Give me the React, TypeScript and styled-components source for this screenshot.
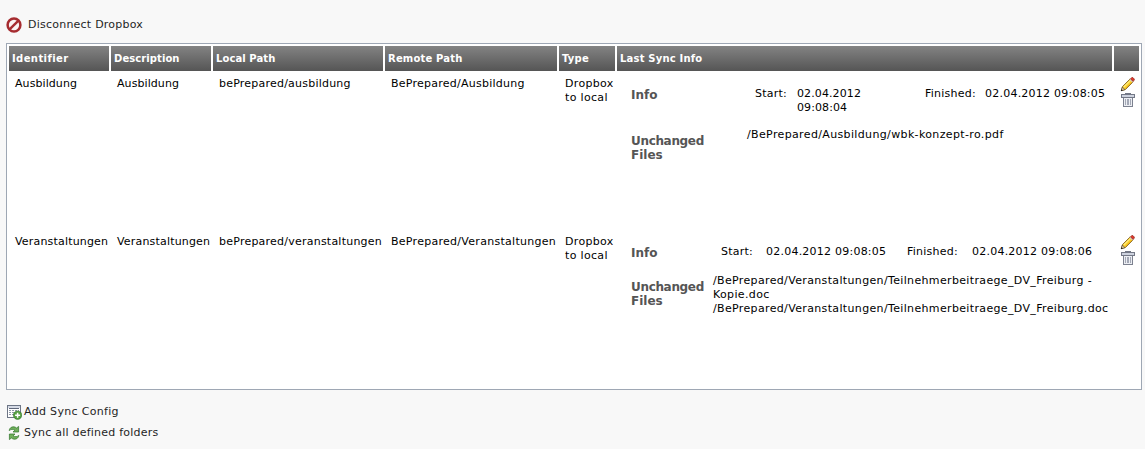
import React from 'react';
import styled, { createGlobalStyle } from 'styled-components';

const GlobalStyle = createGlobalStyle`
  body {
    margin: 0;
    background: #f8f8f8;
    color: #000;
    font: 11px/14px Verdana, "DejaVu Sans", sans-serif;
  }
`;

const Page = styled.main`
  box-sizing: border-box;
  width: 1145px;
  height: 449px;
  padding: 17px 3px 0 6px;
  overflow: hidden;
`;

const Text = styled.span<{ $track?: number }>`
  letter-spacing: ${(p) => p.$track ?? 0.23}px;
  white-space: nowrap;
`;

const Action = styled.a<{ $gap: number; $height: number }>`
  display: flex;
  align-items: center;
  gap: ${(p) => p.$gap}px;
  height: ${(p) => p.$height}px;
  color: #1f1f1f;
`;

const Panel = styled.section`
  box-sizing: border-box;
  width: 1136px;
  height: 347px;
  margin-top: 10px;
  padding: 2px;
  border: 1px solid #9ea7b4;
  background: #fff;
`;

const Row = styled.div`
  display: grid;
  grid-template-columns: 100px 100px 170px 172px 56px 495px 25px;
  column-gap: 2px;
`;

const HeadRow = styled(Row)`
  height: 25px;
`;

const BodyRow = styled(Row)`
  height: 158px;
`;

const HeadCell = styled.div`
  padding: 0 3px;
  background: linear-gradient(#838383, #555);
  color: #fff;
  font-size: 10px;
  font-weight: bold;
  line-height: 25px;
`;

const Cell = styled.div`
  padding: 6px 0 0 6px;
`;

const InfoCell = styled.div`
  padding-left: 14px;
`;

const InfoLine = styled.div<{ $height: number }>`
  display: flex;
  align-items: flex-start;
  padding-top: 16px;
  height: ${(p) => p.$height}px;
`;

const FileLine = styled.div`
  display: flex;
  align-items: flex-start;
`;

const Label = styled.div<{ $width: number; $top: number }>`
  flex: none;
  width: ${(p) => p.$width}px;
  padding-top: ${(p) => p.$top}px;
  color: #555;
  font-size: 12px;
  font-weight: bold;
`;

const Field = styled.div<{ $width: number }>`
  flex: none;
  width: ${(p) => p.$width}px;
`;

const Tools = styled.div`
  display: flex;
  flex-direction: column;
  padding: 5px 0 0 6px;
`;

const Footer = styled.nav`
  padding: 11px 0 0;

  svg {
    margin-top: 1px;
  }
`;

const BanIcon = () => (
  <svg width="16" height="16" viewBox="0 0 16 16">
    <circle cx="8" cy="8" r="6.4" fill="#fbf3f3" stroke="#a62c30" strokeWidth="2.5" />
    <path d="M3.8 12.2 12.2 3.8" stroke="#a62c30" strokeWidth="2.4" />
  </svg>
);

const PencilIcon = () => (
  <svg width="16" height="16" viewBox="0 0 16 16">
    <path d="M1.4 14.6 2.5 10.6 10.2 2.9 13.1 5.8 5.4 13.5Z" fill="#fcd32c" stroke="#7d5a14" strokeWidth=".9" />
    <path d="M3.8 11 10.5 4.3" stroke="#ffec80" strokeWidth="1.1" />
    <path d="M5.2 12.6 12.2 5.6" stroke="#f0b01a" strokeWidth="1" />
    <path d="M9.6 3.7 10.6 2.7 13.3 5.4 12.3 6.4Z" fill="#d9d4cf" />
    <path d="M10.5 2.8 11.8 1.5H12.8L14.3 3V4.1L13 5.4Z" fill="#e0372b" stroke="#8c2a1c" strokeWidth=".7" />
    <path d="M1.3 14.7 2.4 11.1 4.9 13.6Z" fill="#f6dfae" stroke="#4c4130" strokeWidth=".7" />
    <path d="M1 15V13.2L2.8 15Z" fill="#222" />
  </svg>
);

const TrashIcon = () => (
  <svg width="16" height="16" viewBox="0 0 16 16" shapeRendering="crispEdges">
    <path d="M5 1.5H11M5.5 1V3M10.5 1V3" stroke="#737886" />
    <path d="M3.5 6V14.5H12.5V6" fill="#eceef3" stroke="#7c818f" />
    <rect x="1.5" y="2.5" width="13" height="3" fill="#cdd2de" stroke="#737886" />
    <path d="M5.5 7V13M7.5 7V13M8.5 7V13M10.5 7V13" stroke="#a4a9b6" />
  </svg>
);

const AddIcon = () => (
  <svg width="16" height="16" viewBox="0 0 16 16">
    <rect x="1.5" y="1.5" width="13" height="12" fill="#fff" stroke="#6d7585" />
    <path d="M2 3H14" stroke="#d5dae5" strokeWidth="2" />
    <path d="M3 4.5H13" stroke="#5f677a" />
    <path d="M3 6.5H13M3 8.5H12M3 10.5H12" stroke="#8e97a8" strokeDasharray="2 1" />
    <circle cx="11.6" cy="11.2" r="4.2" fill="#569f42" stroke="#33792a" strokeWidth=".6" />
    <path d="M11.6 8.7V13.7M9.1 11.2H14.1" stroke="#fff" strokeWidth="1.5" />
  </svg>
);

const SyncIcon = () => (
  <svg width="16" height="16" viewBox="0 0 16 16">
    <path d="M3.2 5.6C3.4 2.4 7.4.4 10.6 3L12.6 1.4V7H7L8.8 5.2C7 3.9 4.8 4.2 3.2 5.6Z" fill="#6fae5b" stroke="#2f7429" strokeWidth=".7" />
    <path d="M12.8 10.4C12.6 13.6 8.6 15.6 5.4 13L3.4 14.6V9H9L7.2 10.8C9 12.1 11.2 11.8 12.8 10.4Z" fill="#6fae5b" stroke="#2f7429" strokeWidth=".7" />
  </svg>
);

const RowTools = () => (
  <Tools>
    <PencilIcon />
    <TrashIcon />
  </Tools>
);

const heads: [string, number][] = [
  ['Identifier', 0.4],
  ['Description', 0.08],
  ['Local Path', 0.08],
  ['Remote Path', 0.18],
  ['Type', 0.2],
  ['Last Sync Info', 0.2],
  ['', 0],
];

const NameCells = ({ items }: { items: [string, number][] }) => (
  <>
    {items.map(([item, track], i) => (
      <Cell key={i}><Text $track={track}>{item}</Text></Cell>
    ))}
    <Cell><Text $track={0.33}>Dropbox<br />to local</Text></Cell>
  </>
);

const UnchangedLabel = ({ width }: { width: number }) => (
  <Label $width={width} $top={6}>
    <Text $track={-0.33}>Unchanged</Text><br />
    <Text $track={0}>Files</Text>
  </Label>
);

export default function App() {
  return (
    <Page>
      <GlobalStyle />
      <Action $gap={6} $height={16}><BanIcon /><Text>Disconnect Dropbox</Text></Action>
      <Panel>
        <HeadRow>
          {heads.map(([h, track], i) => <HeadCell key={i}><Text $track={track}>{h}</Text></HeadCell>)}
        </HeadRow>
        <BodyRow>
          <NameCells items={[['Ausbildung', 0.08], ['Ausbildung', 0.08], ['bePrepared/ausbildung', 0.22], ['BePrepared/Ausbildung', 0.25]]} />
          <InfoCell>
            <InfoLine $height={41}>
              <Label $width={124} $top={1}><Text $track={0}>Info</Text></Label>
              <Field $width={42}><Text>Start:</Text></Field>
              <Field $width={128}><Text $track={0.1}>02.04.2012<br />09:08:04</Text></Field>
              <Field $width={60}><Text>Finished:</Text></Field>
              <Text>02.04.2012 09:08:05</Text>
            </InfoLine>
            <FileLine>
              <UnchangedLabel width={116} />
              <Text $track={0.36}>/BePrepared/Ausbildung/wbk-konzept-ro.pdf</Text>
            </FileLine>
          </InfoCell>
          <RowTools />
        </BodyRow>
        <BodyRow>
          <NameCells items={[['Veranstaltungen', 0.18], ['Veranstaltungen', 0.18], ['bePrepared/veranstaltungen', 0.23], ['BePrepared/Veranstaltungen', 0.28]]} />
          <InfoCell>
            <InfoLine $height={29}>
              <Label $width={90} $top={1}><Text $track={0}>Info</Text></Label>
              <Field $width={45}><Text>Start:</Text></Field>
              <Field $width={141}><Text>02.04.2012 09:08:05</Text></Field>
              <Field $width={65}><Text>Finished:</Text></Field>
              <Text>02.04.2012 09:08:06</Text>
            </InfoLine>
            <FileLine>
              <UnchangedLabel width={82} />
              <Text $track={0.35}>
                /BePrepared/Veranstaltungen/Teilnehmerbeitraege_DV_Freiburg -<br />
                Kopie.doc<br />
                /BePrepared/Veranstaltungen/Teilnehmerbeitraege_DV_Freiburg.doc
              </Text>
            </FileLine>
          </InfoCell>
          <RowTools />
        </BodyRow>
      </Panel>
      <Footer>
        <Action $gap={2} $height={21}><AddIcon /><Text $track={0.32}>Add Sync Config</Text></Action>
        <Action $gap={2} $height={21}><SyncIcon /><Text>Sync all defined folders</Text></Action>
      </Footer>
    </Page>
  );
}
